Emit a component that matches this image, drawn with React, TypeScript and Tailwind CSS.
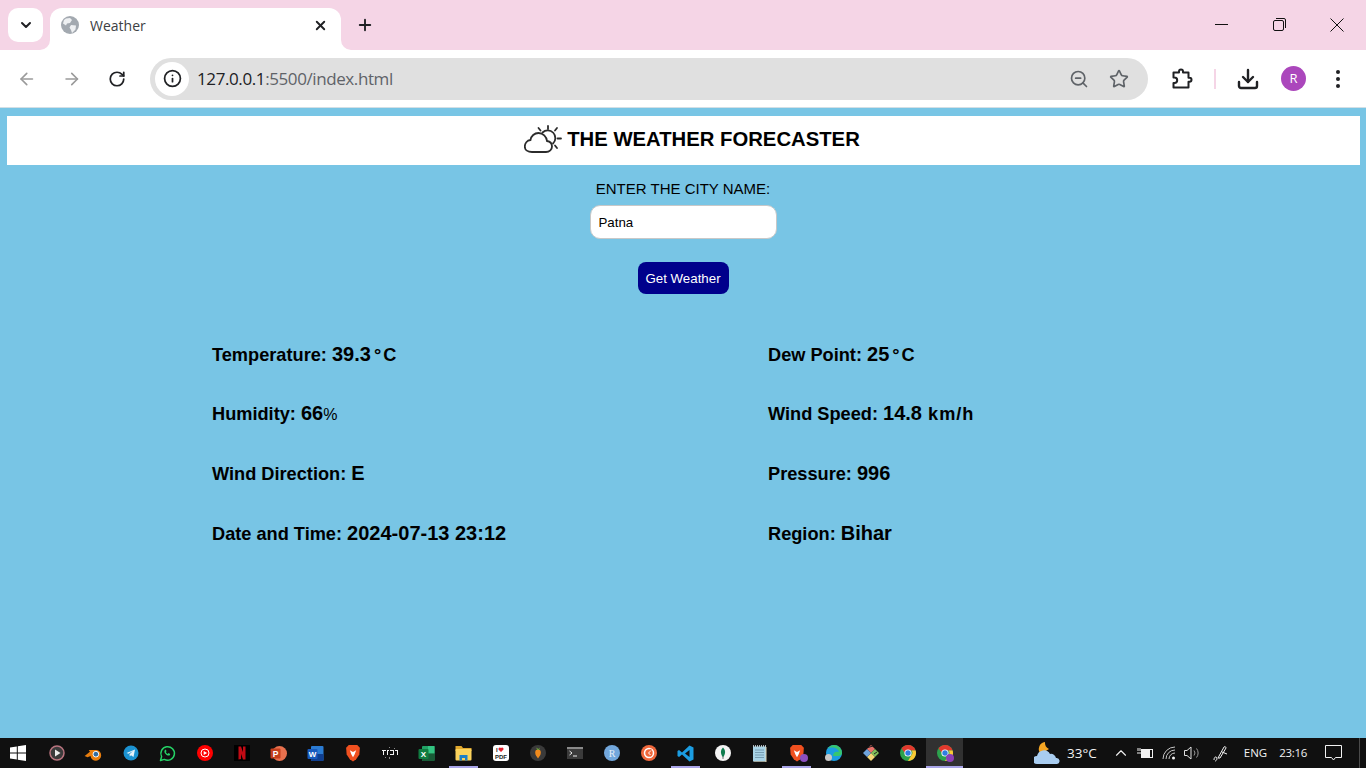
import { ArrowLeft, ArrowRight, ChevronDown, ChevronUp, Download, Info, Plus, RotateCw, Star, X, ZoomOut } from 'lucide-react';
import type { ReactNode } from 'react';

const SYSTEM_FONT = "font-['Open_Sans','Noto_Sans',sans-serif]";

const DEGREE = 'ml-[3px] tracking-[2px]';
const WIDE_UNIT = 'tracking-[1px]';
const THIN_UNIT = 'text-[16px] font-normal';

const readings: { label: string; value: string; unit?: string; unitClass?: string }[] = [
	{ label: 'Temperature:', value: '39.3', unit: '°C', unitClass: DEGREE },
	{ label: 'Dew Point:', value: '25', unit: '°C', unitClass: DEGREE },
	{ label: 'Humidity:', value: '66', unit: '%', unitClass: THIN_UNIT },
	{ label: 'Wind Speed:', value: '14.8', unit: ' km/h', unitClass: WIDE_UNIT },
	{ label: 'Wind Direction:', value: 'E' },
	{ label: 'Pressure:', value: '996' },
	{ label: 'Date and Time:', value: '2024-07-13 23:12' },
	{ label: 'Region:', value: 'Bihar' },
];

function TabFlare({ side }: { side: 'left' | 'right' }) {
	return (
		<svg
			width="10"
			height="10"
			viewBox="0 0 10 10"
			className={side === 'left' ? 'absolute bottom-0 -left-[10px]' : 'absolute bottom-0 -right-[10px]'}
		>
			<path d={side === 'left' ? 'M10 0V10H0A10 10 0 0 0 10 0Z' : 'M0 0V10H10A10 10 0 0 1 0 0Z'} fill="#ffffff" />
		</svg>
	);
}

function Globe() {
	return (
		<svg width="18" height="18" viewBox="0 0 18 18">
			<circle cx="9" cy="9" r="9" fill="#a3a9b0" />
			<path d="M5 2.500 9 2l2 2-2 3-3 .5-1 2-3-2 1-3.500ZM10 9l5 .5-.5 4L11 17l-1-3-1.500-2.500Z" fill="#eef0f2" />
		</svg>
	);
}

function Puzzle() {
	return (
		<svg width="24" height="24" viewBox="0 0 24 24" fill="none" stroke="#202124" strokeWidth="2" strokeLinejoin="round">
			<path d="M3.500 5.500H9V4.500a2 2 0 0 1 4 0v1h5.500v5.200h1a2 2 0 0 1 0 4h-1v5.800H3.500v-4.500h1a2.700 2.700 0 0 0 0-5.400h-1Z" />
		</svg>
	);
}

function ForecastLogo() {
	return (
		<svg width="38" height="30" viewBox="0 0 38 30" fill="none" stroke="#2b2b2b" strokeWidth="1.800" strokeLinecap="round">
			<path d="M8 27h14c3.500 0 6-2.500 6-5.500 0-2.800-2-5-5-5.500-.5-4.500-4-8-8.500-8-4 0-7.500 3-8 7C3 15.500.8 18.500.8 21.500.8 25 4 27 8 27Z" />
			<path d="M18.500 7.500A7.200 7.200 0 0 1 29 18.500" />
			<path d="M24 1v3M14.500 3l2 2.500M33 3l-2 2.500M33.500 13.500H37M31 20.500l2 2.500" />
		</svg>
	);
}

function Brave() {
	return (
		<svg width="16" height="18" viewBox="0 0 15 17">
			<path d="M3.500 1h8l2.500 2.500-.5 6.500-3 4.500L7.500 16.500 4.500 14.500l-3-4.500L1 3.500Z" fill="#f0501f" />
			<path d="M4.500 6 7.500 7.500 10.500 6 9 10l-1.500 2.500L6 10Z" fill="#fff" />
		</svg>
	);
}

function Chrome() {
	return (
		<svg width="16" height="16" viewBox="0 0 16 16">
			<circle cx="8" cy="8" r="8" fill="#2ca24d" />
			<path d="M8 0a8 8 0 0 1 7.600 5.500H8A3 3 0 0 0 5 8L1.500 3.500A8 8 0 0 1 8 0Z" fill="#e2382d" />
			<path d="M15.600 5.500A8 8 0 0 1 8 16l3.500-6a3 3 0 0 0 0-4.500Z" fill="#fcc934" />
			<circle cx="8" cy="8" r="3.600" fill="#fff" />
			<circle cx="8" cy="8" r="2.700" fill="#2f7de1" />
		</svg>
	);
}

const taskbarIcons: { key: string; node: ReactNode; running?: boolean; active?: boolean }[] = [
	{
		key: 'player',
		node: (
			<svg width="16" height="16" viewBox="0 0 16 16">
				<circle cx="8" cy="8" r="7" fill="#3b3b3b" stroke="#b9747f" strokeWidth="1.500" />
				<path d="M6 4.500 11.500 8 6 11.500Z" fill="#ececec" />
			</svg>
		),
	},
	{
		key: 'blender',
		node: (
			<svg width="19" height="16" viewBox="0 0 16 13">
				<path d="M.5 9 5 5.500 4 4h6.500a4.500 4.500 0 1 1-5 5L3 10Z" fill="#e87d0d" />
				<circle cx="10" cy="7.500" r="2.400" fill="#2f6ca3" stroke="#fff" strokeWidth="0.800" />
			</svg>
		),
	},
	{
		key: 'telegram',
		node: (
			<svg width="16" height="16" viewBox="0 0 16 16">
				<circle cx="8" cy="8" r="7.500" fill="#1b92d1" />
				<path d="M3.500 8 12 4.500 10.500 12 8 10.300 6.800 11.500 6.500 9.300 10 6 5.500 8.800Z" fill="#e6f3fa" />
			</svg>
		),
	},
	{
		key: 'whatsapp',
		node: (
			<svg width="17" height="17" viewBox="0 0 17 17" fill="none">
				<path d="M1.500 15.500 2.600 11.600A6.800 6.800 0 1 1 5.300 14.400Z" stroke="#25d366" strokeWidth="1.500" strokeLinejoin="round" />
				<path d="M6 5c-1 1-.8 2.500.6 4s3 2 4.200 1.200l.4-1.300-1.700-.8-.8.800c-.8-.3-1.500-1-1.900-1.900l.7-.8L6.800 4.600Z" fill="#25d366" />
			</svg>
		),
	},
	{
		key: 'ytmusic',
		node: (
			<svg width="16" height="16" viewBox="0 0 16 16">
				<circle cx="8" cy="8" r="8" fill="#ff0000" />
				<circle cx="8" cy="8" r="4" fill="none" stroke="#fff" strokeWidth="1" />
				<path d="M6.700 6 10.200 8 6.700 10Z" fill="#fff" />
			</svg>
		),
	},
	{
		key: 'netflix',
		node: (
			<svg width="16" height="16" viewBox="0 0 16 16">
				<rect width="16" height="16" fill="#000" />
				<path d="M4.500 1.500H7L11.500 14.500H9ZM4.500 1.500H7V14L4.500 14.500ZM9 1.500h2.500v13L9 14Z" fill="#c20a14" />
			</svg>
		),
	},
	{
		key: 'powerpoint',
		node: (
			<svg width="17" height="17" viewBox="0 0 17 17">
				<circle cx="9.500" cy="8.500" r="7.500" fill="#e8714e" />
				<rect x="0.500" y="3.500" width="10" height="10" rx="1" fill="#c43e1c" />
				<text x="5.500" y="11.500" textAnchor="middle" fontSize="8.500" fontWeight="700" fill="#fff" fontFamily="Liberation Sans, sans-serif">
					P
				</text>
			</svg>
		),
	},
	{
		key: 'word',
		node: (
			<svg width="17" height="17" viewBox="0 0 17 17">
				<rect x="4" y="1" width="12.500" height="15" rx="1" fill="#2b7cd3" />
				<rect x="4" y="9" width="12.500" height="7" rx="1" fill="#103f91" />
				<rect x="0.500" y="4" width="10" height="10" rx="1" fill="#185abd" />
				<text x="5.500" y="11.800" textAnchor="middle" fontSize="8" fontWeight="700" fill="#fff" fontFamily="Liberation Sans, sans-serif">
					W
				</text>
			</svg>
		),
	},
	{ key: 'brave', node: <Brave /> },
	{
		key: 'figlet',
		node: (
			<svg width="16" height="16" viewBox="0 0 16 16">
				<path d="M0 5h4v1H2v4H1V6H0ZM5 5h2v1H6v4H5ZM8 5h4v5H8V9h3V6H8ZM13 5h3v5h-1V6h-2Z" fill="#f2f2f2" />
				<path d="M7 2h1v1H7ZM7 12h1v2H7ZM3 12h1v1H3ZM12 3h1v1h-1Z" fill="#888" />
			</svg>
		),
	},
	{
		key: 'excel',
		node: (
			<svg width="17" height="17" viewBox="0 0 17 17">
				<rect x="4" y="1" width="12.500" height="15" rx="1" fill="#21a366" />
				<rect x="10" y="1" width="6.500" height="7.500" fill="#33c481" />
				<rect x="4" y="8.500" width="12.500" height="7.500" rx="1" fill="#185c37" />
				<rect x="0.500" y="4" width="10" height="10" rx="1" fill="#107c41" />
				<text x="5.500" y="11.800" textAnchor="middle" fontSize="8" fontWeight="700" fill="#fff" fontFamily="Liberation Sans, sans-serif">
					X
				</text>
			</svg>
		),
	},
	{
		key: 'explorer',
		running: true,
		node: (
			<svg width="17" height="16" viewBox="0 0 17 16">
				<path d="M0.500 1h6l1.500 2h8.500v3H0.500Z" fill="#e0a82e" />
				<rect x="0.500" y="4" width="16" height="11.500" rx="1" fill="#fbd35c" />
				<path d="M4.500 15.500V10h8v5.500h-2.500v-2.500H7v2.500Z" fill="#1d80c8" />
			</svg>
		),
	},
	{
		key: 'pdf',
		node: (
			<svg width="16" height="16" viewBox="0 0 16 16">
				<rect width="16" height="16" rx="3" fill="#fff" />
				<text x="3" y="7" fontSize="6" fontWeight="700" fill="#222" fontFamily="Liberation Sans, sans-serif">
					I
				</text>
				<path d="M8 7 5.500 4.500a1.500 1.500 0 0 1 2.500-1.500 1.500 1.500 0 0 1 2.500 1.500Z" fill="#e2202c" />
				<text x="8" y="13.500" textAnchor="middle" fontSize="6" fontWeight="700" fill="#222" fontFamily="Liberation Sans, sans-serif">
					PDF
				</text>
			</svg>
		),
	},
	{
		key: 'fl',
		node: (
			<svg width="16" height="16" viewBox="0 0 16 16">
				<circle cx="8" cy="8" r="8" fill="#3a3a3a" />
				<path d="M8 4.500c3 0 3.500 3 2 6L8 13.500 6 10.500c-1.500-3-1-6 2-6Z" fill="#f08a1d" />
				<path d="M7.500 5 6 2.500 8.500 4l1.500-1.500L9 5Z" fill="#6fa83a" />
			</svg>
		),
	},
	{
		key: 'terminal',
		node: (
			<svg width="16" height="12" viewBox="0 0 16 12">
				<rect width="16" height="12" fill="#3b3b3b" />
				<rect width="16" height="2" fill="#8a8a8a" />
				<path d="M2.500 4 5 6 2.500 8" stroke="#eee" strokeWidth="1" fill="none" />
				<path d="M6 9h4" stroke="#eee" strokeWidth="1" />
			</svg>
		),
	},
	{
		key: 'r',
		node: (
			<svg width="16" height="16" viewBox="0 0 16 16">
				<circle cx="8" cy="8" r="8" fill="#72a7dc" />
				<text x="8" y="11.500" textAnchor="middle" fontSize="10" fill="#e6eff8" fontFamily="Liberation Serif, serif">
					R
				</text>
			</svg>
		),
	},
	{
		key: 'clock',
		node: (
			<svg width="16" height="16" viewBox="0 0 16 16">
				<circle cx="8" cy="8" r="8" fill="#f0683c" />
				<circle cx="8" cy="8" r="4.500" fill="none" stroke="#fff" strokeWidth="1.500" />
				<path d="M10.500 4.500 7 8l3.500 3" stroke="#f0683c" strokeWidth="2" fill="none" />
				<path d="M10 5.500 7.500 8l2 2" stroke="#fff" strokeWidth="1" fill="none" />
			</svg>
		),
	},
	{
		key: 'vscode',
		running: true,
		node: (
			<svg width="17" height="17" viewBox="0 0 17 17">
				<path d="M12.500.5 16.500 2.500v12L12.500 16.500 5 9.500 2 12 .5 11V6L2 5l3 2.500ZM12.500 5 8 8.500l4.500 3.500Z" fill="#1b9de2" />
			</svg>
		),
	},
	{
		key: 'mongo',
		node: (
			<svg width="16" height="16" viewBox="0 0 16 16">
				<circle cx="8" cy="8" r="8" fill="#f4f4f4" />
				<path d="M8 2.500c2.500 2.500 3 5.500 0 10-3-4.500-2.500-7.500 0-10Z" fill="#0f7c4e" />
				<path d="M8 11.500v2.500" stroke="#555" strokeWidth="0.800" />
			</svg>
		),
	},
	{
		key: 'notepad',
		node: (
			<svg width="15" height="17" viewBox="0 0 15 17">
				<rect x="1" y="1.500" width="13" height="15" fill="#a8d3e6" />
				<path d="M3 5h9M3 7.500h9M3 10h9M3 12.500h9" stroke="#6b8fa3" strokeWidth="0.800" />
				<path d="M1 1h13" stroke="#dfe9ee" strokeWidth="1.500" strokeDasharray="1 1" />
				<path d="M14 2v15H2" stroke="#e0d4b4" strokeWidth="1" fill="none" />
			</svg>
		),
	},
	{
		key: 'brave-profile',
		running: true,
		node: (
			<span className="relative flex">
				<Brave />
				<span className="absolute -right-[3px] bottom-0 h-2 w-2 rounded-full bg-[#8b4fc0]" />
			</span>
		),
	},
	{
		key: 'edge',
		node: (
			<span className="relative flex">
				<svg width="16" height="16" viewBox="0 0 16 16">
					<circle cx="8" cy="8" r="8" fill="#1b9de2" />
					<path d="M8 0a8 8 0 0 1 8 8c0 2.500-2.500 3-4.500 3H7C7 7 10 6 13 7 12 3 6 1 1.500 4 3 1.500 5.500 0 8 0Z" fill="#37c66f" />
				</svg>
				<span className="absolute -left-[1px] bottom-0 h-[7px] w-[7px] rounded-full bg-[#c8c8c8]" />
			</span>
		),
	},
	{
		key: 'git',
		node: (
			<svg width="16" height="16" viewBox="0 0 16 16">
				<path d="M8 0 12 4 8 8 4 4Z" fill="#e8716a" />
				<path d="M12 4 16 8 12 12 8 8Z" fill="#7fbf5a" />
				<path d="M8 8 12 12 8 16 4 12Z" fill="#f2d675" />
				<path d="M4 4 8 8 4 12 0 8Z" fill="#6fa4dc" />
				<path d="M5 2.500 10 1M11 9 14 7" stroke="#222" strokeWidth="1" />
			</svg>
		),
	},
	{ key: 'chrome', node: <Chrome /> },
	{
		key: 'chrome-profile',
		running: true,
		active: true,
		node: (
			<span className="relative flex">
				<Chrome />
				<span className="absolute -right-[1px] -bottom-[1px] h-2 w-2 rounded-full bg-[#8b3fb5]" />
			</span>
		),
	},
];

function BrowserChrome() {
	return (
		<header className={`${SYSTEM_FONT} shrink-0`}>
			<div className="flex h-[50px] bg-[#f5d5e6]">
				<div className="mt-2 ml-2 flex h-[34px] w-[35px] items-center justify-center rounded-[10px] bg-white">
					<ChevronDown size={16} strokeWidth={3} color="#202124" />
				</div>
				<div className="relative mt-2 ml-[7px] flex h-[42px] w-[291px] items-center rounded-t-xl bg-white pr-[13px] pb-2 pl-[11px]">
					<TabFlare side="left" />
					<Globe />
					<span className="ml-[11px] flex-1 text-[14px] text-[#3c4043]">Weather</span>
					<X size={15} strokeWidth={3} color="#202124" />
					<TabFlare side="right" />
				</div>
				<div className="mt-4 ml-[15px] h-[18px]">
					<Plus size={18} strokeWidth={2.500} color="#202124" />
				</div>
				<div className="ml-auto flex h-full items-start">
					<div className="flex h-[49px] w-[58px] items-center justify-center">
						<div className="h-px w-[13px] bg-[#111]" />
					</div>
					<div className="flex h-[49px] w-[58px] items-center justify-center">
						<svg width="13" height="13" viewBox="0 0 13 13" fill="none" stroke="#111">
							<rect x="0.500" y="2.500" width="10" height="10" rx="1.500" />
							<path d="M3 .5h8a1.500 1.500 0 0 1 1.500 1.500v8" />
						</svg>
					</div>
					<div className="flex h-[49px] w-[58px] items-center justify-center">
						<svg width="14" height="14" viewBox="0 0 14 14" stroke="#111">
							<path d="M.5.5l13 13M13.500.5l-13 13" />
						</svg>
					</div>
				</div>
			</div>
			<div className="flex h-[58px] items-center rounded-t-lg border-b border-[#d3dfe5] bg-white">
				<div className="ml-[17px] flex w-[64px] gap-[25px]">
					<ArrowLeft size={20} strokeWidth={2} color="#9a9a9a" />
					<ArrowRight size={20} strokeWidth={2} color="#9a9a9a" />
				</div>
				<div className="ml-[27px]">
					<RotateCw size={18} strokeWidth={2.300} color="#202124" />
				</div>
				<div className="ml-[24px] flex h-[42px] w-[998px] items-center rounded-full bg-[#e0e0e0] pr-[19px] pl-[5px]">
					<div className="flex h-[34px] w-[34px] items-center justify-center rounded-full bg-white">
						<Info size={19} strokeWidth={2.200} color="#202124" />
					</div>
					<span className="ml-2 flex-1 text-[17px] tracking-[-0.4px] whitespace-nowrap text-[#5f6368]">
						<span className="text-[#202124]">127.0.0.1</span>:5500/index.html
					</span>
					<ZoomOut size={20} strokeWidth={2} color="#5f6368" className="mr-5" />
					<Star size={20} strokeWidth={2} color="#5f6368" />
				</div>
				<div className="ml-[22px]">
					<Puzzle />
				</div>
				<div className="ml-[20px] h-5 w-[2px] bg-[#f5d5e6]" />
				<div className="ml-5">
					<Download size={24} strokeWidth={2.400} color="#202124" />
				</div>
				<div className="ml-[21px] flex h-[25px] w-[25px] items-center justify-center rounded-full bg-[#ab47bc] text-[13px] text-white">
					R
				</div>
				<div className="ml-[30px] flex flex-col gap-[3px]">
					<div className="h-[4px] w-[4px] rounded-full bg-[#202124]" />
					<div className="h-[4px] w-[4px] rounded-full bg-[#202124]" />
					<div className="h-[4px] w-[4px] rounded-full bg-[#202124]" />
				</div>
			</div>
		</header>
	);
}

function WeatherPage() {
	return (
		<main className="flex-1 bg-[#78c5e5] pt-2 font-['Liberation_Sans',Arial,sans-serif] text-black">
			<div className="mr-[6px] ml-[7px] flex h-[49px] items-center justify-center gap-[5px] bg-white pb-[2px] pl-[17px]">
				<ForecastLogo />
				<h1 className="text-[20.300px] font-bold">THE WEATHER FORECASTER</h1>
			</div>
			<form className="flex flex-col items-center pt-[15px]">
				<label className="text-[15px] leading-[18px]">ENTER THE CITY NAME:</label>
				<input
					defaultValue="Patna"
					className="mt-[7px] h-[34px] w-[187px] rounded-[10px] border border-[#c8c8c8] bg-white px-2 text-[13.300px] text-black"
				/>
				<button type="button" className="mt-[23px] h-8 w-[91px] rounded-lg bg-[#00008b] pt-px text-[13.300px] text-white">
					Get Weather
				</button>
			</form>
			<div className="mt-[48.700px] ml-[212px] grid grid-cols-[556px_1fr] gap-y-[36.200px]">
				{readings.map(({ label, value, unit, unitClass }) => (
					<p key={label} className="h-[23.500px] text-[18.200px] leading-[23px] font-bold whitespace-pre">
						{label} <span className="text-[20px]">{value}</span>
						{unit && <span className={unitClass}>{unit}</span>}
					</p>
				))}
			</div>
		</main>
	);
}

function Taskbar() {
	return (
		<footer className={`${SYSTEM_FONT} flex h-[30px] shrink-0 items-stretch bg-[#101010] text-[11.500px] text-[#f2f2f2]`}>
			<div className="flex w-[38px] items-center pl-[10px]">
				<svg width="16" height="16" viewBox="0 0 16 16" fill="#ffffff">
					<path d="M0 2.500 6.800 1.500V7.500H0ZM7.800 1.300 16 0V7.500H7.800ZM0 8.500H6.800V14.500L0 13.500ZM7.800 8.500H16V16L7.800 14.700Z" />
				</svg>
			</div>
			{taskbarIcons.map((icon) => (
				<div
					key={icon.key}
					className={`relative flex w-[37px] items-center justify-center ${icon.active ? 'bg-[#313131]' : ''}`}
				>
					{icon.node}
					{icon.running && <div className={`absolute bottom-0 h-[2px] bg-[#a9a5e8] ${icon.active ? 'inset-x-0' : 'inset-x-1'}`} />}
				</div>
			))}
			<div className="ml-auto flex items-center">
				<svg width="26" height="24" viewBox="0 0 26 24">
					<path d="M11 1a7 7 0 0 0-4 12l8-5a7 7 0 0 1-4-7Z" fill="#f5a623" />
					<path d="M3 23a4 4 0 0 1 0-8 7 7 0 0 1 13-2 5 5 0 0 1 6 4 3 3 0 0 1 1 6Z" fill="#a9cdf0" />
				</svg>
				<span className="ml-[7px] text-[13.500px]">33°C</span>
				<ChevronUp size={18} strokeWidth={1.500} className="ml-[15px]" />
				<svg width="17" height="12" viewBox="0 0 17 12" fill="none" stroke="#f2f2f2" className="ml-[7px]">
					<rect x="4.500" y="2.500" width="11" height="8" />
					<rect x="5.500" y="3.500" width="7" height="6" fill="#f2f2f2" />
					<path d="M0 6h4M1 1v3M3 1v3" />
				</svg>
				<svg width="16" height="14" viewBox="0 0 16 14" fill="none" stroke="#c8c8c8" className="ml-2">
					<path d="M1 13A12 12 0 0 1 13 1M4 13a9 9 0 0 1 9-9M7 13a6 6 0 0 1 6-6" />
					<circle cx="11.500" cy="12" r="1.500" fill="#f2f2f2" stroke="none" />
				</svg>
				<svg width="17" height="14" viewBox="0 0 17 14" fill="none" stroke="#e0e0e0" className="ml-[6px]">
					<path d="M.5 4.500H3L7 1v12L3 9.500H.5Z" />
					<path d="M10 4.500a4 4 0 0 1 0 5M12.500 2.500a7 7 0 0 1 0 9" stroke="#9a9a9a" />
				</svg>
				<svg width="18" height="17" viewBox="0 0 16 17" fill="none" stroke="#f2f2f2" className="ml-[11px]">
					<path d="M1 15c0-3 2-4 3-2 0 2-1 3-2 3M5 13l6-11c1-1 2 0 2 1L7 13ZM9 7l5 2" />
				</svg>
				<span className="ml-[14px]">ENG</span>
				<span className="ml-3 tracking-[-0.3px]">23:16</span>
				<svg width="18" height="17" viewBox="0 0 18 17" fill="none" stroke="#f2f2f2" className="ml-[18px]">
					<path d="M.5.5h16v12h-6l-2 2.500-2-2.500h-6Z" />
				</svg>
				<div className="ml-[16px] h-full w-[7px] border-l border-[#4a4a4a]" />
			</div>
		</footer>
	);
}

export default function App() {
	return (
		<div className="flex h-screen flex-col overflow-hidden">
			<BrowserChrome />
			<WeatherPage />
			<Taskbar />
		</div>
	);
}
